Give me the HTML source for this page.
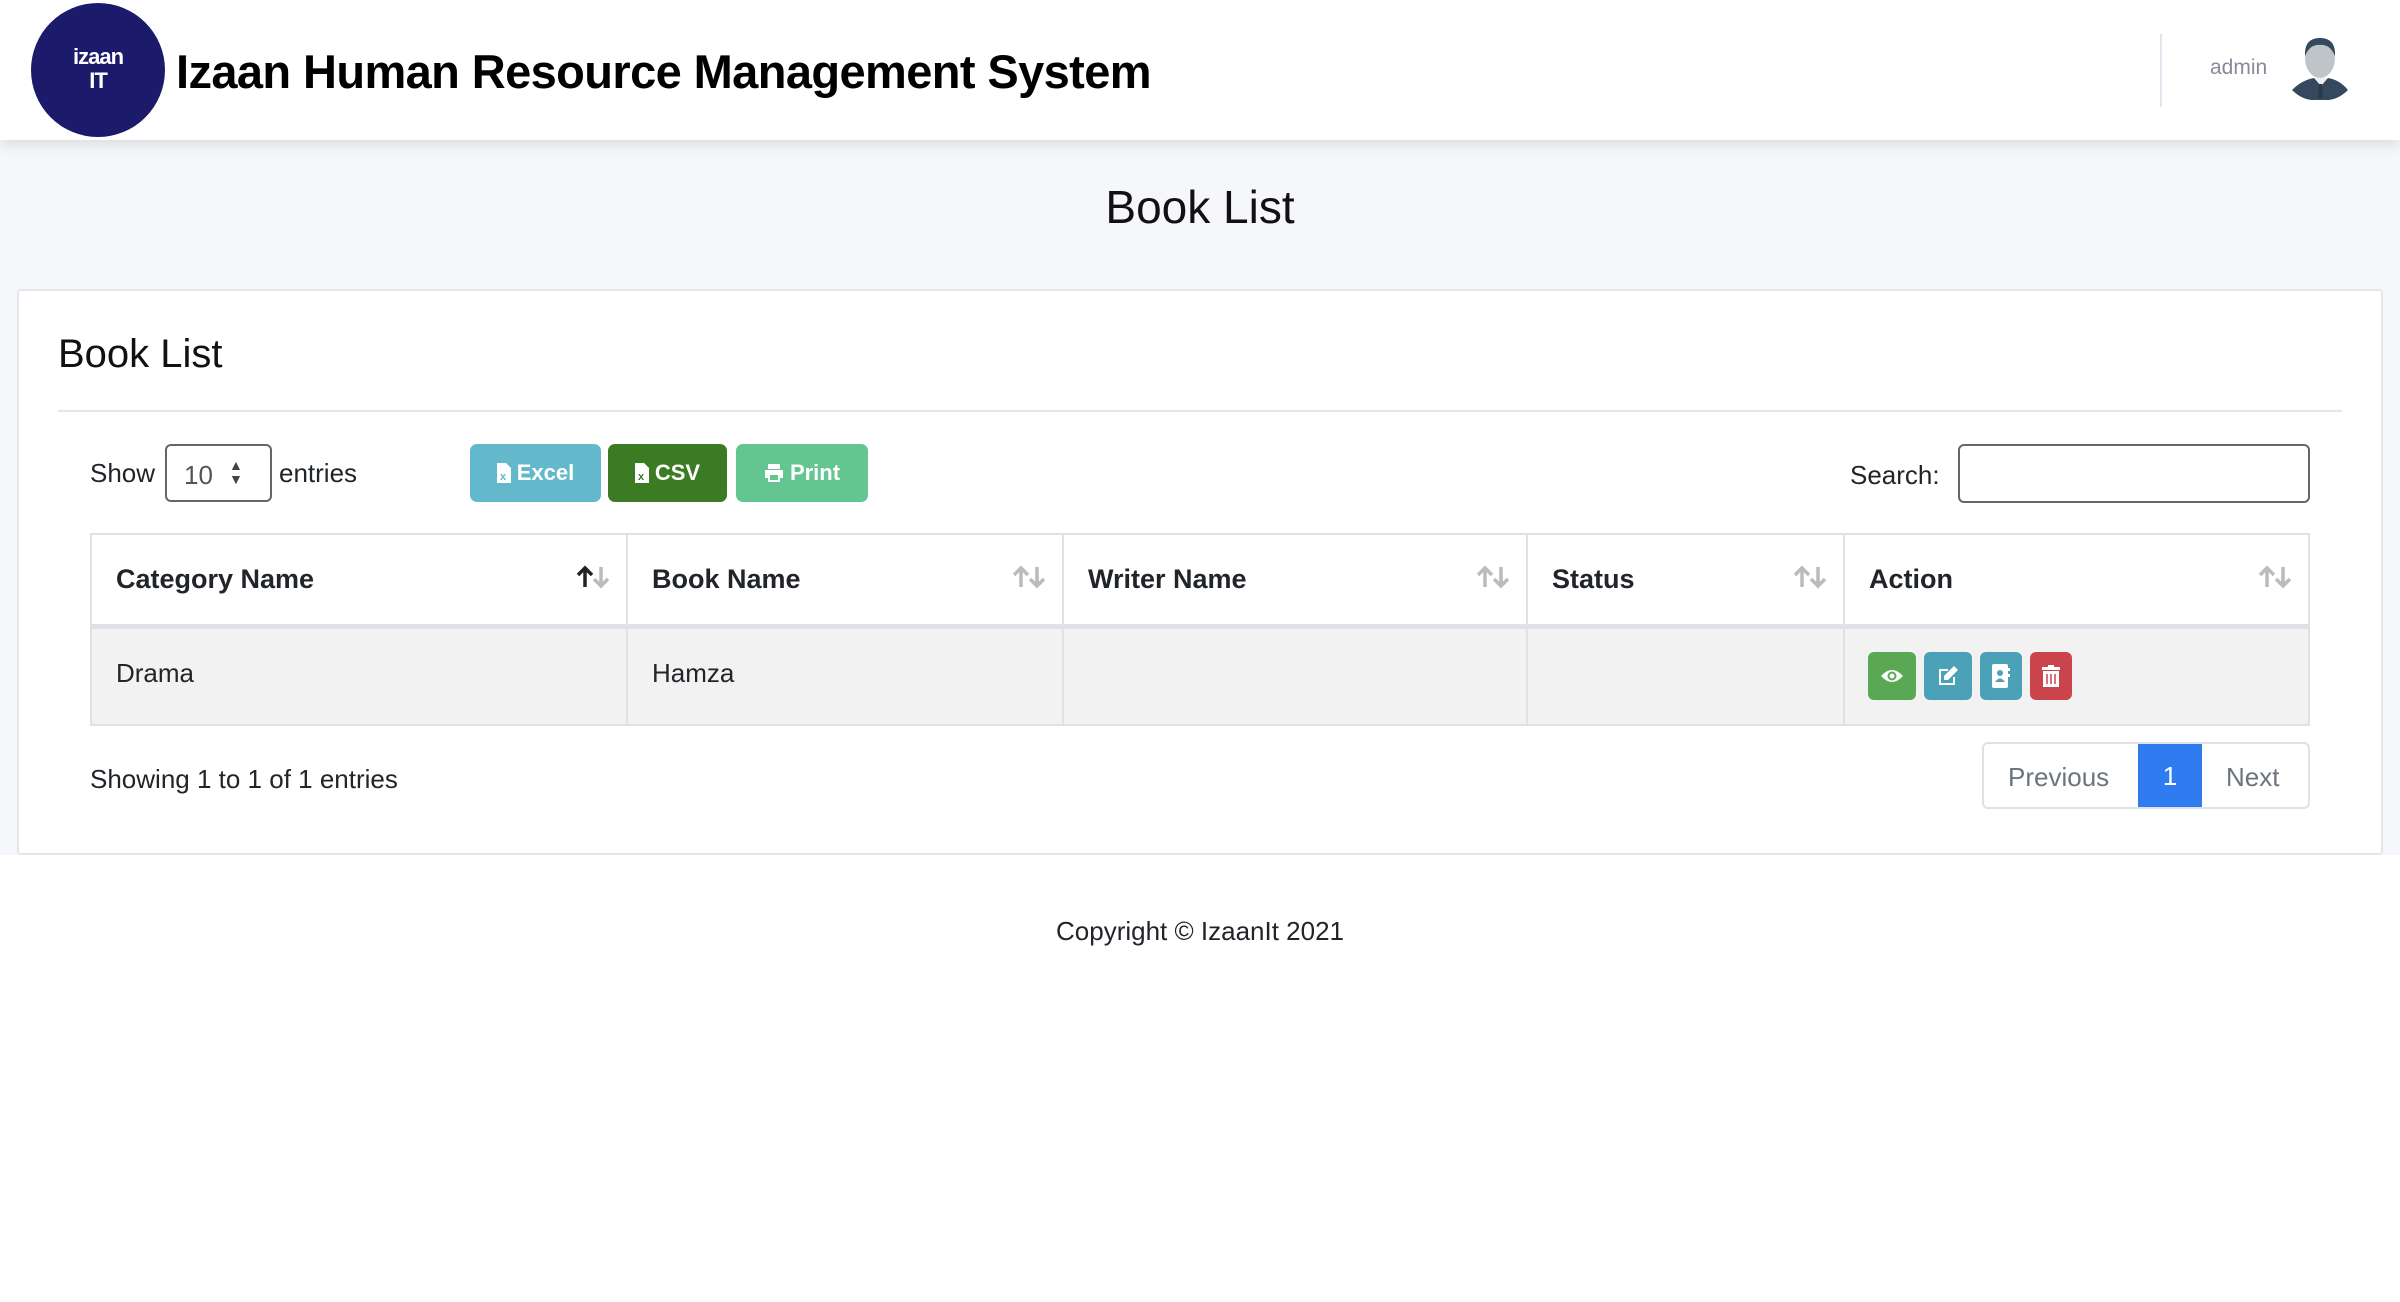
<!DOCTYPE html>
<html><head><style>
*{box-sizing:border-box;margin:0;padding:0}
body{width:2400px;height:1302px;background:#fff;font-family:"Liberation Sans",Arial,sans-serif;color:#212529;position:relative;overflow:hidden}
.abs{position:absolute}
.hdr{left:0;top:0;width:2400px;height:140px;background:#fff;box-shadow:0 4px 14px rgba(0,0,0,.12);z-index:2}
.band{left:0;top:140px;width:2400px;height:715px;background:#f5f7fb}
.card{left:17px;top:289px;width:2366px;height:566px;background:#fff;border:2px solid #e3e6ea;border-radius:4px}
.btn{height:58px;top:444px;border-radius:7px;color:#fff;font-weight:bold;font-size:22px;display:flex;align-items:center;justify-content:center;gap:6px}
th,td{border:2px solid #dee2e6;text-align:left}
table{border-collapse:collapse;position:absolute;left:90px;top:533px;width:2220px}
th{height:92px;font-size:27px;padding-left:24px;position:relative;border-bottom:5px solid #dee2e6}
td{height:99px;font-size:26px;padding-left:24px;background:#f2f2f2;padding-bottom:6px}
.ar{position:absolute;right:16px;top:30px}
.ab{position:absolute;top:652px;height:48px;border-radius:6px;display:flex;align-items:center;justify-content:center}
</style></head><body>
<div class="abs hdr">
 <div class="abs" style="left:31px;top:3px;width:134px;height:134px;border-radius:50%;background:#1c1b6b;color:#fff;font-size:22px;font-weight:bold;text-align:center;line-height:24px;padding-top:42px;letter-spacing:-1px">izaan<br>IT</div>
 <div class="abs" style="left:176px;top:44px;font-size:47px;font-weight:bold;color:#000;letter-spacing:-0.6px">Izaan Human Resource Management System</div>
 <div class="abs" style="left:2160px;top:34px;width:2px;height:73px;background:#e4e4ee"></div>
 <div class="abs" style="left:2210px;top:56px;font-size:21px;color:#878a99">admin</div>
 <svg class="abs" style="left:2292px;top:36px" width="58" height="64" viewBox="0 0 58 64"><path d="M0 54 Q10 44 22 42 L36 42 Q48 44 56 54 Q44 66 28 64 Q12 66 0 54Z" fill="#35495e"/><path d="M22 42 L29 50 L36 42Z" fill="#eee"/><ellipse cx="28" cy="22" rx="15" ry="20" fill="#bfc4c8"/><path d="M13 20 Q12 2 28 2 Q44 2 43 20 Q38 8 28 9 Q18 8 13 20Z" fill="#35495e"/><path d="M27 48 L30 48 L31 62 L26 62Z" fill="#2a3a4a"/></svg>
</div>
<div class="abs band"></div>
<div class="abs" style="left:0;width:2400px;top:180px;text-align:center;font-size:46px;color:#111">Book List</div>
<div class="abs card"></div>
<div class="abs" style="left:58px;top:332px;font-size:40px;color:#111">Book List</div>
<div class="abs" style="left:58px;top:410px;width:2284px;height:2px;background:#e6e6e6"></div>
<div class="abs" style="left:90px;top:458px;font-size:26px">Show</div>
<div class="abs" style="left:165px;top:444px;width:107px;height:58px;border:2px solid #666;border-radius:6px;font-size:26px;color:#555;padding:14px 0 0 17px">10<span style="position:absolute;left:62px;top:12px;font-size:14px;line-height:14px;color:#444">▲<br>▼</span></div>
<div class="abs" style="left:279px;top:458px;font-size:26px">entries</div>
<div class="abs btn" style="left:470px;width:131px;background:#63b9cb"><svg width="14" height="20" viewBox="0 0 14 20"><path d="M0 0H9L14 5V20H0Z" fill="#fff"/><text x="3" y="17" font-size="11" fill="#63b9cb" font-family="Liberation Sans">x</text></svg>Excel</div>
<div class="abs btn" style="left:608px;width:119px;background:#3a7b23"><svg width="14" height="20" viewBox="0 0 14 20"><path d="M0 0H9L14 5V20H0Z" fill="#fff"/><text x="3" y="17" font-size="11" fill="#3a7b23" font-family="Liberation Sans">x</text></svg>CSV</div>
<div class="abs btn" style="left:736px;width:132px;background:#63c691"><svg width="20" height="20" viewBox="0 0 20 20"><path d="M4 1H16V6H4Z M1 7H19V15H16V19H4V15H1Z" fill="#fff"/><path d="M6 12H14V17H6Z" fill="#63c691"/></svg>Print</div>
<div class="abs" style="left:1850px;top:460px;font-size:26px">Search:</div>
<div class="abs" style="left:1958px;top:444px;width:352px;height:59px;border:2px solid #666;border-radius:6px"></div>
<table>
<tr><th style="width:536px">Category Name<svg class="ar" width="34" height="24" viewBox="0 0 34 24"><path d="M9 22V3M2 10L9 3L16 10" stroke="#222" stroke-width="3.5" fill="none"/><path d="M25 2V21M18 14L25 21L32 14" stroke="#bbb" stroke-width="3.5" fill="none"/></svg></th><th style="width:436px">Book Name<svg class="ar" width="34" height="24" viewBox="0 0 34 24"><path d="M9 22V3M2 10L9 3L16 10M25 2V21M18 14L25 21L32 14" stroke="#bbb" stroke-width="3.5" fill="none"/></svg></th><th style="width:464px">Writer Name<svg class="ar" width="34" height="24" viewBox="0 0 34 24"><path d="M9 22V3M2 10L9 3L16 10M25 2V21M18 14L25 21L32 14" stroke="#bbb" stroke-width="3.5" fill="none"/></svg></th><th style="width:317px">Status<svg class="ar" width="34" height="24" viewBox="0 0 34 24"><path d="M9 22V3M2 10L9 3L16 10M25 2V21M18 14L25 21L32 14" stroke="#bbb" stroke-width="3.5" fill="none"/></svg></th><th>Action<svg class="ar" width="34" height="24" viewBox="0 0 34 24"><path d="M9 22V3M2 10L9 3L16 10M25 2V21M18 14L25 21L32 14" stroke="#bbb" stroke-width="3.5" fill="none"/></svg></th></tr>
<tr><td>Drama</td><td>Hamza</td><td></td><td></td><td></td></tr>
</table>
<div class="abs ab" style="left:1868px;width:48px;background:#5aa854"><svg width="24" height="16" viewBox="0 0 24 16"><path d="M1 8Q12 -4 23 8Q12 20 1 8Z" fill="#fff"/><circle cx="12" cy="8" r="4.5" fill="#5aa854"/><circle cx="12" cy="8" r="2.5" fill="#fff"/></svg></div>
<div class="abs ab" style="left:1924px;width:48px;background:#4ba2b8"><svg width="22" height="22" viewBox="0 0 22 22"><path d="M2 4H11V6H4V18H16V12H18V20H2Z" fill="#fff"/><path d="M17 1L21 5L11 15H7V11Z" fill="#fff"/></svg></div>
<div class="abs ab" style="left:1980px;width:42px;background:#4ba2b8"><svg width="18" height="24" viewBox="0 0 18 24"><rect x="0" y="0" width="16" height="24" rx="2" fill="#fff"/><rect x="15" y="4" width="3" height="3" fill="#fff"/><rect x="15" y="10" width="3" height="3" fill="#fff"/><circle cx="8" cy="9" r="3" fill="#4ba2b8"/><path d="M3 18Q8 11 13 18Z" fill="#4ba2b8"/></svg></div>
<div class="abs ab" style="left:2030px;width:42px;background:#cc444b"><svg width="18" height="22" viewBox="0 0 18 22"><path d="M0 2H6V0H12V2H18V5H0Z M1 6H17V22H1Z" fill="#fff"/><path d="M5 9V19M9 9V19M13 9V19" stroke="#cc444b" stroke-width="1.5"/></svg></div>
<div class="abs" style="left:90px;top:764px;font-size:26px">Showing 1 to 1 of 1 entries</div>
<div class="abs" style="left:1982px;top:742px;width:328px;height:67px;border:2px solid #dee2e6;border-radius:6px;overflow:hidden;font-size:26px;color:#6c757d">
 <div class="abs" style="left:24px;top:18px">Previous</div>
 <div class="abs" style="left:154px;top:-2px;width:64px;height:69px;background:#2f7cf0;color:#fff;text-align:center;line-height:69px">1</div>
 <div class="abs" style="left:242px;top:18px">Next</div>
</div>
<div class="abs" style="left:0;width:2400px;top:916px;text-align:center;font-size:26px">Copyright © IzaanIt 2021</div>
</body></html>
